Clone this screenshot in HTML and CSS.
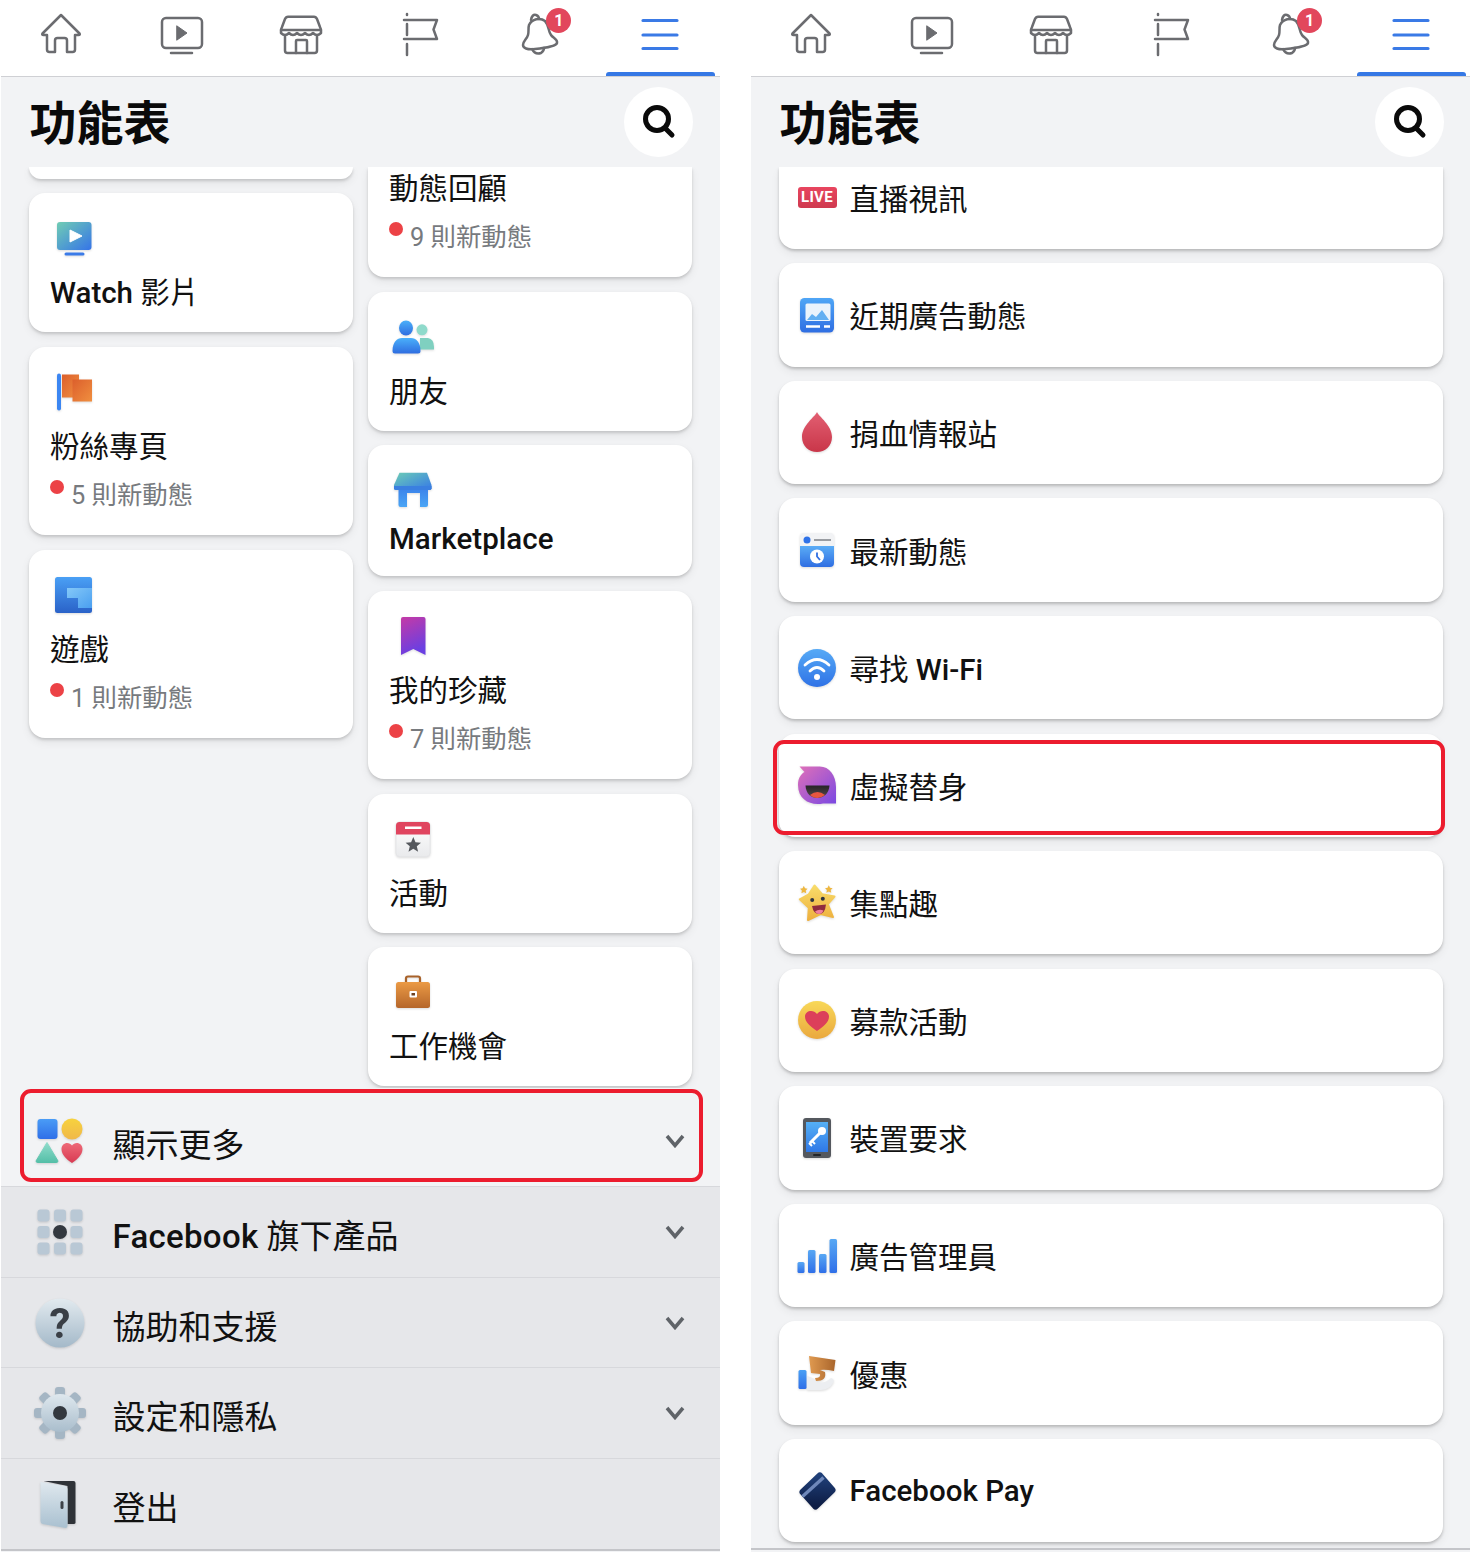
FILE: index.html
```html
<!DOCTYPE html>
<html lang="zh-Hant">
<head>
<meta charset="utf-8">
<title>功能表</title>
<link rel="stylesheet" href="styles.css">
</head>
<body>
<section class="phone">
  <nav class="nav">
    <div class="tab"><svg class="tab-icon" viewBox="0 0 50 50"><path d="M25 7 6.500 25.500Q5.500 27 7.500 27H11V41.500Q11 44 13.500 44H19V32.500Q19 30 21.500 30H28.500Q31 30 31 32.500V44H36.500Q39 44 39 41.500V27H42.500Q44.500 27 43.500 25.500Z"/></svg></div>
    <div class="tab"><svg class="tab-icon" viewBox="0 0 50 50"><rect x="6" y="10" width="40" height="30" rx="4"/><path class="solid" d="M21 18 31 25 21 32Z"/><path d="M15 45H36"/></svg></div>
    <div class="tab"><svg class="tab-icon" viewBox="0 0 50 50"><path d="M12 8.700H38Q40 8.700 41 11L44 19Q45 21 45 23V25Q41 29 37 25 33 29 29 25 25 29 21 25 17 29 13 25 9 29 5 25V23Q5 21 6 19L9 11Q10 8.700 12 8.700Z"/><path d="M5 22H45"/><path d="M9 28V42.500Q9 45 11.500 45H38.500Q41 45 41 42.500V28"/><path d="M20 45V33Q20 32 21 32H30Q31 32 31 33V45"/></svg></div>
    <div class="tab"><svg class="tab-icon" viewBox="0 0 50 50"><path d="M12 6V7M9 12H42L38.500 21.500 42 31H9M12 16V27M12 36V47"/></svg></div>
    <div class="tab tab-bell"><svg class="tab-icon" viewBox="0 0 50 50"><path d="M14 17C17 11 25 9 30 13 34 17 33 23 36 27 38 30 43 31 42 35 41 38 30 40 20 41 12 42 8 40 8 37 8 33 12 31 13 27 14 24 13 20 14 17Z"/><path d="M16 12Q17 6 21 7 24 8 24 11"/><path d="M17 41Q20 47 26 45 29 43 29 40"/></svg><span class="badge">1</span></div>
    <div class="tab tab-active"><svg class="tab-icon tab-menu" viewBox="0 0 50 50"><path d="M8 12.500H42M8 27H42M8 40.500H42"/></svg></div>
  </nav>
  <header class="head"><h1 class="title">功能表</h1><div class="search"><svg class="search-icon" viewBox="0 0 36 36"><circle cx="16" cy="15" r="11.500"/><path d="M24 24 31 31"/></svg></div></header>
  <div class="grid">
    <div class="col">
      <div class="card card-stub"></div>
      <div class="card">
        <svg class="card-icon" viewBox="0 0 44 44"><defs><linearGradient id="gw" x1="0" y1="0" x2="1" y2="1"><stop offset="0" stop-color="#70cdb4"/><stop offset="1" stop-color="#3574e8"/></linearGradient></defs><rect x="5" y="6" width="34.500" height="28" rx="3" fill="url(#gw)"/><path d="M18 14 30 20 18 26Z" fill="#fff" stroke="#fff" stroke-linejoin="round"/><path d="M14 38H31" stroke="#3b7be8" stroke-width="3" stroke-linecap="round"/></svg>
        <div class="card-label"><span class="en">Watch</span> 影片</div>
      </div>
      <div class="card card-sub">
        <svg class="card-icon" viewBox="0 0 44 44"><defs><linearGradient id="gp" x1="0" y1="0" x2="1" y2="1"><stop offset="0" stop-color="#dc5f2c"/><stop offset="1" stop-color="#f08f3f"/></linearGradient></defs><rect x="5" y="3.500" width="4" height="37" rx="2" fill="#3b86f2"/><rect x="10" y="4.500" width="17" height="23" fill="url(#gp)"/><rect x="20.500" y="9.500" width="19.500" height="22" fill="url(#gp)"/></svg>
        <div class="card-label">粉絲專頁</div>
        <div class="sub"><i class="dot"></i>5 則新動態</div>
      </div>
      <div class="card card-sub">
        <svg class="card-icon" viewBox="0 0 44 44"><defs><linearGradient id="gg" x1="0" y1="0" x2="0" y2="1"><stop offset="0" stop-color="#4aa0f5"/><stop offset="1" stop-color="#2a62c8"/></linearGradient><linearGradient id="gg2" x1="0" y1="0" x2="1" y2="1"><stop offset="0" stop-color="#84c8f8"/><stop offset="1" stop-color="#4a9ff0"/></linearGradient></defs><rect x="3" y="4" width="37" height="36" rx="2.500" fill="url(#gg)"/><path d="M15 15H40V35H26V25H15Z" fill="url(#gg2)"/></svg>
        <div class="card-label">遊戲</div>
        <div class="sub"><i class="dot"></i>1 則新動態</div>
      </div>
    </div>
    <div class="col">
      <div class="card card-cut">
        <div class="card-label card-label-cut">動態回顧</div>
        <div class="sub"><i class="dot"></i>9 則新動態</div>
      </div>
      <div class="card">
        <svg class="card-icon" viewBox="0 0 44 44"><defs><linearGradient id="gf" x1="0" y1="0" x2="0" y2="1"><stop offset="0" stop-color="#4ab0fa"/><stop offset="1" stop-color="#2f6de0"/></linearGradient></defs><circle cx="31" cy="14.800" r="5.500" fill="#8fdacb"/><path d="M29 34.500V23H37Q43 24 43 32V34.500Z" fill="#7fd0c0"/><ellipse cx="15" cy="13" rx="7" ry="7.500" fill="url(#gf)"/><path d="M1.500 36C1.500 27 6 23 11 23H20C25 23 29.500 27 29.500 36Q29.500 38.500 27 38.500H4Q1.500 38.500 1.500 36Z" fill="url(#gf)"/></svg>
        <div class="card-label">朋友</div>
      </div>
      <div class="card card-compact">
        <svg class="card-icon" viewBox="0 0 44 44"><defs><linearGradient id="gm" x1="0" y1="0" x2="1" y2="1"><stop offset="0" stop-color="#6ccdb6"/><stop offset="1" stop-color="#3578e8"/></linearGradient><linearGradient id="gm2" x1="0" y1="0" x2="0" y2="1"><stop offset="0" stop-color="#3b82ea"/><stop offset="1" stop-color="#4aa5f5"/></linearGradient></defs><path d="M7.500 20H37V37Q37 39 35 39H29V25H16V39H9.500Q7.500 39 7.500 37Z" fill="url(#gm2)"/><path d="M8.500 4.700H36L40.500 17V20.500Q40.500 22 38 22H5.500Q3 22 3 20.500V17Z" fill="url(#gm)"/><path d="M3 18H40.500V20.500Q40.500 22 38 22H5.500Q3 22 3 20.500Z" fill="#3a7fe0"/></svg>
        <div class="card-label card-label-en"><span class="en">Marketplace</span></div>
      </div>
      <div class="card card-sub">
        <svg class="card-icon" viewBox="0 0 44 44"><defs><linearGradient id="gs" x1="0" y1="0" x2="0.300" y2="1"><stop offset="0" stop-color="#c53aa6"/><stop offset="1" stop-color="#6a3fe2"/></linearGradient></defs><path d="M10 5Q10 3 12 3H32.500Q34.500 3 34.500 5V41L22.300 35 10 41Z" fill="url(#gs)"/></svg>
        <div class="card-label">我的珍藏</div>
        <div class="sub"><i class="dot"></i>7 則新動態</div>
      </div>
      <div class="card">
        <svg class="card-icon" viewBox="0 0 44 44"><defs><linearGradient id="ge" x1="0" y1="0" x2="0" y2="1"><stop offset="0" stop-color="#fff"/><stop offset="1" stop-color="#e9eaec"/></linearGradient></defs><rect x="5" y="5" width="34" height="34.500" rx="3.500" fill="url(#ge)" stroke="#e4e5e7"/><path d="M5 17.500V8.500Q5 5 8.500 5H35.500Q39 5 39 8.500V17.500Z" fill="#e0455f"/><rect x="14" y="9.500" width="16.500" height="2.500" fill="#fff"/><path d="M22.300 20 24.500 25.200 30 25.700 25.800 29.300 27.100 34.700 22.300 31.800 17.500 34.700 18.800 29.300 14.600 25.700 20.100 25.200Z" fill="#55585d"/></svg>
        <div class="card-label">活動</div>
      </div>
      <div class="card">
        <svg class="card-icon" viewBox="0 0 44 44"><defs><linearGradient id="gj" x1="0" y1="0" x2="0" y2="1"><stop offset="0" stop-color="#eb9a45"/><stop offset="1" stop-color="#b5662a"/></linearGradient></defs><path d="M15 12V8.500Q15 6.500 17 6.500H27Q29 6.500 29 8.500V12" fill="none" stroke="#a8622a" stroke-width="2.200"/><rect x="5" y="12" width="34" height="26" rx="2.500" fill="url(#gj)"/><rect x="18.500" y="21" width="7.500" height="6.500" rx="1" fill="#fff"/><rect x="20.500" y="23" width="3.500" height="2.500" fill="#6d4120"/></svg>
        <div class="card-label">工作機會</div>
      </div>
    </div>
  </div>
  <div class="row row-first">
    <svg class="row-icon" viewBox="0 0 52 52"><defs><linearGradient id="gb" x1="0" y1="0" x2="0" y2="1"><stop offset="0" stop-color="#4a9cf6"/><stop offset="1" stop-color="#2f6fe8"/></linearGradient><linearGradient id="gy" x1="0" y1="0" x2="0" y2="1"><stop offset="0" stop-color="#f7d23e"/><stop offset="1" stop-color="#f0b84a"/></linearGradient><linearGradient id="gt" x1="0" y1="0" x2="0" y2="1"><stop offset="0" stop-color="#8fdccb"/><stop offset="1" stop-color="#55bfa8"/></linearGradient><linearGradient id="gh" x1="0" y1="0" x2="0" y2="1"><stop offset="0" stop-color="#ee6a78"/><stop offset="1" stop-color="#d83a52"/></linearGradient></defs><rect x="3.500" y="4" width="20" height="20" rx="3" fill="url(#gb)"/><ellipse cx="38" cy="14" rx="10.500" ry="10.500" fill="url(#gy)"/><path d="M13 27.500 24 46Q24 47.500 22 47.500H4Q2 47.500 2 46Z" fill="url(#gt)" stroke="url(#gt)" stroke-linejoin="round"/><path d="M38 48C32 44 27.500 39.500 27.500 34 27.500 27.500 35 26 38 30.500 41 26 48.500 27.500 48.500 34 48.500 39.500 44 44 38 48Z" fill="url(#gh)"/></svg>
    <div class="row-label">顯示更多</div>
    <svg class="chevron" viewBox="0 0 20 14"><path d="M2 2 10 11.500 18 2"/></svg>
    <div class="mark mark-row"></div>
  </div>
  <div class="row">
    <svg class="row-icon" viewBox="0 0 52 52"><g fill="#b9c8d5"><rect x="3.500" y="3.500" width="12" height="12" rx="3"/><rect x="20" y="3.500" width="12" height="12" rx="3"/><rect x="36.500" y="3.500" width="12" height="12" rx="3"/><rect x="3.500" y="20" width="12" height="12" rx="3"/><rect x="36.500" y="20" width="12" height="12" rx="3"/><rect x="3.500" y="36.500" width="12" height="12" rx="3"/><rect x="20" y="36.500" width="12" height="12" rx="3"/><rect x="36.500" y="36.500" width="12" height="12" rx="3"/></g><circle cx="26" cy="26" r="7" fill="#33383f"/></svg>
    <div class="row-label"><span class="en">Facebook</span> 旗下產品</div>
    <svg class="chevron" viewBox="0 0 20 14"><path d="M2 2 10 11.500 18 2"/></svg>
  </div>
  <div class="row">
    <svg class="row-icon" viewBox="0 0 52 52"><defs><linearGradient id="gq" x1="0" y1="0" x2="0" y2="1"><stop offset="0" stop-color="#e2eaef"/><stop offset="1" stop-color="#a4b9c9"/></linearGradient></defs><ellipse cx="26" cy="26" rx="24.500" ry="24.500" fill="url(#gq)"/><text class="q" x="26" y="40.500" text-anchor="middle">?</text></svg>
    <div class="row-label">協助和支援</div>
    <svg class="chevron" viewBox="0 0 20 14"><path d="M2 2 10 11.500 18 2"/></svg>
  </div>
  <div class="row">
    <svg class="row-icon" viewBox="0 0 52 52"><defs><linearGradient id="gc" x1="0" y1="0" x2="0" y2="1"><stop offset="0" stop-color="#dfe8ee"/><stop offset="1" stop-color="#a9bdcc"/></linearGradient></defs><g fill="#a5b6c4"><rect x="21" y="0" width="10" height="52" rx="3"/><rect x="21" y="0" width="10" height="52" rx="3" transform="rotate(45 26 26)"/><rect x="21" y="0" width="10" height="52" rx="3" transform="rotate(90 26 26)"/><rect x="21" y="0" width="10" height="52" rx="3" transform="rotate(135 26 26)"/></g><circle cx="26" cy="26" r="19" fill="url(#gc)"/><circle cx="26" cy="26" r="7" fill="#33383f"/></svg>
    <div class="row-label">設定和隱私</div>
    <svg class="chevron" viewBox="0 0 20 14"><path d="M2 2 10 11.500 18 2"/></svg>
  </div>
  <div class="row row-last">
    <svg class="row-icon" viewBox="0 0 52 52"><defs><linearGradient id="gd" x1="0" y1="0" x2="0" y2="1"><stop offset="0" stop-color="#dfe8ee"/><stop offset="1" stop-color="#a9c0d0"/></linearGradient></defs><g transform="translate(-2.500 0)"><path d="M12 3H42Q44 3 44 5V45Q44 46 42 46H36V8Z" fill="#2f3338"/><path d="M9 4 34 8Q36 8.500 36 11V48Q36 50 34 50L11 46Q9 45.500 9 43Z" fill="url(#gd)"/><rect x="29" y="23" width="3" height="8" rx="1.500" fill="#3d4248"/></g></svg>
    <div class="row-label">登出</div>
  </div>
</section>

<section class="phone">
  <nav class="nav">
    <div class="tab"><svg class="tab-icon" viewBox="0 0 50 50"><path d="M25 7 6.500 25.500Q5.500 27 7.500 27H11V41.500Q11 44 13.500 44H19V32.500Q19 30 21.500 30H28.500Q31 30 31 32.500V44H36.500Q39 44 39 41.500V27H42.500Q44.500 27 43.500 25.500Z"/></svg></div>
    <div class="tab"><svg class="tab-icon" viewBox="0 0 50 50"><rect x="6" y="10" width="40" height="30" rx="4"/><path class="solid" d="M21 18 31 25 21 32Z"/><path d="M15 45H36"/></svg></div>
    <div class="tab"><svg class="tab-icon" viewBox="0 0 50 50"><path d="M12 8.700H38Q40 8.700 41 11L44 19Q45 21 45 23V25Q41 29 37 25 33 29 29 25 25 29 21 25 17 29 13 25 9 29 5 25V23Q5 21 6 19L9 11Q10 8.700 12 8.700Z"/><path d="M5 22H45"/><path d="M9 28V42.500Q9 45 11.500 45H38.500Q41 45 41 42.500V28"/><path d="M20 45V33Q20 32 21 32H30Q31 32 31 33V45"/></svg></div>
    <div class="tab"><svg class="tab-icon" viewBox="0 0 50 50"><path d="M12 6V7M9 12H42L38.500 21.500 42 31H9M12 16V27M12 36V47"/></svg></div>
    <div class="tab tab-bell"><svg class="tab-icon" viewBox="0 0 50 50"><path d="M14 17C17 11 25 9 30 13 34 17 33 23 36 27 38 30 43 31 42 35 41 38 30 40 20 41 12 42 8 40 8 37 8 33 12 31 13 27 14 24 13 20 14 17Z"/><path d="M16 12Q17 6 21 7 24 8 24 11"/><path d="M17 41Q20 47 26 45 29 43 29 40"/></svg><span class="badge">1</span></div>
    <div class="tab tab-active"><svg class="tab-icon tab-menu" viewBox="0 0 50 50"><path d="M8 12.500H42M8 27H42M8 40.500H42"/></svg></div>
  </nav>
  <header class="head"><h1 class="title">功能表</h1><div class="search"><svg class="search-icon" viewBox="0 0 36 36"><circle cx="16" cy="15" r="11.500"/><path d="M24 24 31 31"/></svg></div></header>
  <div class="list">
    <div class="item item-cut"><div class="icon-box"><span class="live">LIVE</span></div><div class="item-label">直播視訊</div></div>
    <div class="item">
      <svg class="item-icon" viewBox="0 0 44 44"><defs><linearGradient id="ga" x1="0" y1="0" x2="0" y2="1"><stop offset="0" stop-color="#4fa6f6"/><stop offset="1" stop-color="#2f6ee2"/></linearGradient></defs><rect x="5" y="5" width="34" height="34.500" rx="4.500" fill="url(#ga)"/><rect x="10.500" y="10.500" width="25" height="17.500" rx="1.500" fill="#eaf3fc"/><path d="M12 27 17 21 21 24 27 17 34 27Z" fill="#62aff2"/><path d="M11 33.500H25M29 33.500H35" stroke="#fff" stroke-width="2.400"/></svg>
      <div class="item-label">近期廣告動態</div>
    </div>
    <div class="item">
      <svg class="item-icon" viewBox="0 0 44 44"><defs><linearGradient id="gbd" x1="0" y1="0" x2="0" y2="1"><stop offset="0" stop-color="#e25f72"/><stop offset="1" stop-color="#c93649"/></linearGradient></defs><path d="M22 2C24 7 37 15 37 27 37 36 30 42 22 42 14 42 7 36 7 27 7 15 20 7 22 2Z" fill="url(#gbd)"/></svg>
      <div class="item-label">捐血情報站</div>
    </div>
    <div class="item">
      <svg class="item-icon" viewBox="0 0 44 44"><defs><linearGradient id="gr" x1="0" y1="0" x2="0" y2="1"><stop offset="0" stop-color="#5aacf6"/><stop offset="1" stop-color="#2f6ee2"/></linearGradient></defs><rect x="5" y="5" width="34" height="34" rx="4" fill="#f2f3f5"/><path d="M5 18H39V35Q39 39 35 39H9Q5 39 5 35Z" fill="url(#gr)"/><circle cx="12" cy="12" r="3.500" fill="#2f72e8"/><path d="M19 12H36" stroke="#9a9da2" stroke-width="2"/><circle cx="22" cy="28.500" r="7" fill="#fff"/><path d="M22 24.500V28.500L25 32" fill="none" stroke="#2f6ee2" stroke-width="1.800"/></svg>
      <div class="item-label">最新動態</div>
    </div>
    <div class="item">
      <svg class="item-icon" viewBox="0 0 44 44"><defs><linearGradient id="gwf" x1="0" y1="0" x2="0" y2="1"><stop offset="0" stop-color="#56aaf6"/><stop offset="1" stop-color="#2f72e6"/></linearGradient></defs><circle cx="22" cy="22" r="19" fill="url(#gwf)"/><g fill="none" stroke="#fff" stroke-width="2.800" stroke-linecap="round"><path d="M10 19Q22 8 34 19"/><path d="M15 25Q22 18 29 25"/></g><circle cx="22" cy="31" r="3" fill="#fff"/></svg>
      <div class="item-label">尋找 <span class="en">Wi-Fi</span></div>
    </div>
    <div class="item">
      <svg class="item-icon" viewBox="0 0 44 44"><defs><linearGradient id="gav" x1="0" y1="0" x2="1" y2="1"><stop offset="0" stop-color="#e070b8"/><stop offset="1" stop-color="#7a48e2"/></linearGradient><linearGradient id="gav2" x1="0" y1="0" x2="0" y2="1"><stop offset="0" stop-color="#262427"/><stop offset="1" stop-color="#55484a"/></linearGradient></defs><path d="M4.500 3.500H24C34 3 41 12 41 24V40.500H28C16 43 3 37 3 22 3 15 6 11 9.500 9Z" fill="url(#gav)"/><path d="M10.500 22.500H34.500C34 31 28 35 22.500 35 16 35 11 31 10.500 22.500Z" fill="url(#gav2)"/><path d="M15 32Q22.500 26 30 32 26 35 22.500 35 18 35 15 32Z" fill="#e8563f"/></svg>
      <div class="item-label">虛擬替身</div>
      <div class="mark mark-item"></div>
    </div>
    <div class="item">
      <svg class="item-icon" viewBox="0 0 44 44"><defs><linearGradient id="gst" x1="0" y1="0" x2="0" y2="1"><stop offset="0" stop-color="#f8dc6a"/><stop offset="1" stop-color="#eeb03e"/></linearGradient></defs><path d="M19.500 4.500 27.200 13.300 39.500 15.500 32.800 23 38 36 25.500 33 13 39 13.800 26.700 4.800 18.300 13.800 13.300Z" fill="url(#gst)" stroke="url(#gst)" stroke-width="2" stroke-linejoin="round"/><circle cx="17.200" cy="19" r="2" fill="#2f3440"/><circle cx="27.800" cy="17.700" r="2" fill="#2f3440"/><path d="M17 25 31 23.500Q30 33 24 33 18.500 33 17 25Z" fill="#8f2c3e"/><path d="M20 30.500Q24 27.500 28.500 29.500 27 33 24 33 21.500 33 20 30.500Z" fill="#f07f9c"/><path d="M8.800 4.800 10 7.300 12.600 7.700 10.700 9.500 11.200 12.200 8.800 10.900 6.400 12.200 6.900 9.500 5 7.700 7.600 7.300ZM33.800 4.300 35 6.800 37.600 7.200 35.700 9 36.200 11.700 33.800 10.400 31.400 11.700 31.900 9 30 7.200 32.600 6.800Z" fill="#eeb740"/></svg>
      <div class="item-label">集點趣</div>
    </div>
    <div class="item">
      <svg class="item-icon" viewBox="0 0 44 44"><defs><linearGradient id="gfr" x1="0" y1="0" x2="0" y2="1"><stop offset="0" stop-color="#f8d858"/><stop offset="1" stop-color="#eaa83e"/></linearGradient></defs><circle cx="22" cy="22" r="19" fill="url(#gfr)"/><path d="M22 33C15 28 10 24 10 18.500 10 12.500 18.500 11 22 16 25.500 11 34 12.500 34 18.500 34 24 29 28 22 33Z" fill="#dc3f5a"/></svg>
      <div class="item-label">募款活動</div>
    </div>
    <div class="item">
      <svg class="item-icon" viewBox="0 0 44 44"><rect x="8" y="2" width="28" height="40" rx="3" fill="#54585e"/><defs><linearGradient id="gdv" x1="0" y1="0" x2="0" y2="1"><stop offset="0" stop-color="#55b0f5"/><stop offset="1" stop-color="#2f78e6"/></linearGradient></defs><rect x="11" y="6" width="22" height="30" fill="url(#gdv)"/><rect x="18" y="38" width="8" height="2" rx="1" fill="#22252a"/><circle cx="27" cy="15" r="4" fill="#fff"/><path d="M27 15 15 27" stroke="#fff" stroke-width="3"/><path d="M17 25 20 28M14 27 17 30" stroke="#fff" stroke-width="2"/></svg>
      <div class="item-label">裝置要求</div>
    </div>
    <div class="item">
      <svg class="item-icon" viewBox="0 0 44 44"><defs><linearGradient id="gad" x1="0" y1="0" x2="0" y2="1"><stop offset="0" stop-color="#58a8f4"/><stop offset="1" stop-color="#2f6fe8"/></linearGradient></defs><g fill="url(#gad)"><rect x="2.500" y="28" width="7" height="11" rx="1.500"/><rect x="13" y="16" width="7.500" height="23" rx="1.500"/><rect x="24" y="20" width="7.500" height="19" rx="1.500"/><rect x="34.500" y="5" width="7.500" height="34" rx="1.500"/></g></svg>
      <div class="item-label">廣告管理員</div>
    </div>
    <div class="item">
      <svg class="item-icon" viewBox="0 0 44 44"><defs><linearGradient id="gof" x1="0" y1="0" x2="1" y2="0"><stop offset="0" stop-color="#e09a50"/><stop offset="1" stop-color="#a9652c"/></linearGradient><linearGradient id="gob" x1="0" y1="0" x2="0" y2="1"><stop offset="0" stop-color="#4aa0f5"/><stop offset="1" stop-color="#2f6fe8"/></linearGradient></defs><rect x="3.500" y="19" width="8" height="19" rx="1.500" fill="url(#gob)"/><path d="M12 25Q20 27 22 31 30 33 36 27 40 28 38 32 34 39 26 39H12Z" fill="#eceef1"/><path d="M14 5 40.500 9 39 20Q30 18 25 19L30 21Q32 30 21 30L20 27Q26 27 25 23L16 22Z" fill="url(#gof)"/></svg>
      <div class="item-label">優惠</div>
    </div>
    <div class="item">
      <svg class="item-icon" viewBox="0 0 44 44"><defs><linearGradient id="gpy" x1="0" y1="0" x2="0" y2="1"><stop offset="0" stop-color="#1f3f78"/><stop offset="1" stop-color="#0d1c44"/></linearGradient></defs><path d="M24.800 7 37 21 20.500 37 8 23Z" fill="url(#gpy)" stroke="url(#gpy)" stroke-width="7" stroke-linejoin="round"/><path d="M7.500 27.500 28.500 8.500" stroke="#6f88ba" stroke-width="3.400"/></svg>
      <div class="item-label item-label-en"><span class="en">Facebook Pay</span></div>
    </div>
  </div>
</section>
</body>
</html>
```

FILE: styles.css
```css
* { box-sizing: border-box; }
html, body { margin: 0; padding: 0; background: #fff; }
body {
  width: 1470px;
  height: 1564px;
  display: flex;
  gap: 31px;
  padding-left: 1px;
  font-family: Roboto, "Noto Sans CJK TC", sans-serif;
  color: #111;
  overflow: hidden;
}
.phone { width: 719px; height: 1552px; flex: none; display: flex; flex-direction: column; background: #f2f3f5; overflow: hidden; }
.phone + .phone { width: 720px; }
.en { font-weight: 500; }

.nav { display: flex; height: 77px; flex: none; background: #fff; border-bottom: 1.5px solid #cfd0d4; }
.tab { flex: 1; position: relative; display: flex; justify-content: center; padding-top: 8px; }
.tab-icon { width: 50px; height: 50px; fill: none; stroke: #6b6c70; stroke-width: 2.500; stroke-linejoin: round; stroke-linecap: round; }
.solid { fill: #6b6c70; stroke-width: 1; }
.tab-menu { stroke: #3a7ae6; stroke-width: 3.200; }
.tab-active::after { content: ""; position: absolute; left: 6px; right: 5px; bottom: 0; height: 4px; background: #3578e5; border-radius: 3px 3px 0 0; }
.badge { position: absolute; left: 66px; top: 8px; width: 25px; height: 25px; border-radius: 50%; background: #e2475c; color: #fff; font-size: 16px; font-weight: 700; line-height: 25px; text-align: center; }

.head { height: 90px; flex: none; display: flex; align-items: center; justify-content: space-between; padding: 0 27px 0 28.500px; }
.title { margin: 3px 0 0; font-size: 47px; line-height: 60px; font-weight: 700; color: #0a0a0a; }
.search { width: 69px; height: 70px; border-radius: 50%; background: #fff; display: flex; align-items: center; justify-content: center; }
.search-icon { width: 36px; height: 36px; fill: none; stroke: #0a0a0a; stroke-width: 5; stroke-linecap: round; }

.grid { height: 921px; flex: none; overflow: hidden; display: flex; gap: 15px; padding: 0 28px; }
.col { width: 324px; display: flex; flex-direction: column; gap: 14.500px; padding-bottom: 10px; }
.card { background: #fff; border-radius: 16px; padding: 23px 21px 19px; box-shadow: 0 2px 3px rgba(0,0,0,.15), 0 4px 10px rgba(0,0,0,.07); flex: none; }
.card-stub { height: 11.700px; padding: 0; border-radius: 0 0 16px 16px; }
.card-cut { height: 110px; padding-top: 2px; border-radius: 0 0 16px 16px; }
.card-compact { padding-bottom: 17px; }
.card-sub { padding-bottom: 23.500px; }
.card-icon, .item-icon, .row-icon { filter: drop-shadow(0 1px 1px rgba(0,0,0,.14)); }
.card-icon { display: block; width: 44px; height: 44px; margin-left: 2px; }
.card-label { margin-top: 13px; font-size: 29.500px; line-height: 40px; white-space: nowrap; }
.card-label-cut { margin-top: 0; }
.card-label-en { margin-top: 7px; letter-spacing: .05px; }
.sub { margin-top: 11px; display: flex; gap: 7px; font-size: 25.400px; line-height: 34px; color: #777a7e; white-space: nowrap; }
.dot { width: 14px; height: 14px; margin-top: 2px; border-radius: 50%; background: #ec4246; flex: none; }

.row { position: relative; height: 90.700px; flex: none; display: flex; align-items: center; padding: 0 34px; background: #e6e7ea; border-bottom: 1.500px solid #d7d8dc; }
.row-first { height: 99px; padding-top: 8px; background: #f2f3f5; }
.row-last { height: 92px; border-bottom: 2px solid #c4c5c9; }
.row-icon { width: 52px; height: 52px; flex: none; margin-left: -1px; }
.row-label { margin-left: 26.500px; padding-top: 10px; font-size: 33px; line-height: 44px; white-space: nowrap; }
.row-label .en { letter-spacing: .3px; }
.chevron { width: 20px; height: 14px; margin-left: auto; margin-right: 1px; fill: none; stroke: #5f6368; stroke-width: 3.500; }
.q { font-size: 42px; font-weight: 700; fill: #3a3f46; }

.mark { position: absolute; border: 4px solid #ec1c2e; border-radius: 11px; pointer-events: none; }
.mark-row { left: 19px; top: 1px; width: 683px; height: 93px; }
.mark-item { left: -6px; right: -2px; top: 6px; bottom: 2px; }

.list { height: 1383px; flex: none; overflow: hidden; display: flex; flex-direction: column; gap: 14.200px; padding: 0 28px; border-bottom: 2px solid #c4c5c9; }
.item { position: relative; height: 103.400px; flex: none; display: flex; align-items: center; gap: 10.500px; padding-left: 16px; background: #fff; border-radius: 16px; box-shadow: 0 2px 3px rgba(0,0,0,.2), 0 5px 10px rgba(0,0,0,.06); }
.item-cut { height: 82px; padding-bottom: 21px; border-radius: 0 0 16px 16px; }
.item-icon, .icon-box { width: 44px; height: 44px; flex: none; display: flex; align-items: center; justify-content: center; }
.item-label { padding-top: 5px; font-size: 29.500px; line-height: 40px; white-space: nowrap; }
.item-label-en { padding-top: 0; }
.live { width: 39px; height: 21px; border-radius: 3px; background: linear-gradient(#e8455f, #cf3a4f); color: #fff; font-size: 15px; font-weight: 700; line-height: 21px; text-align: center; letter-spacing: .3px; }
```
